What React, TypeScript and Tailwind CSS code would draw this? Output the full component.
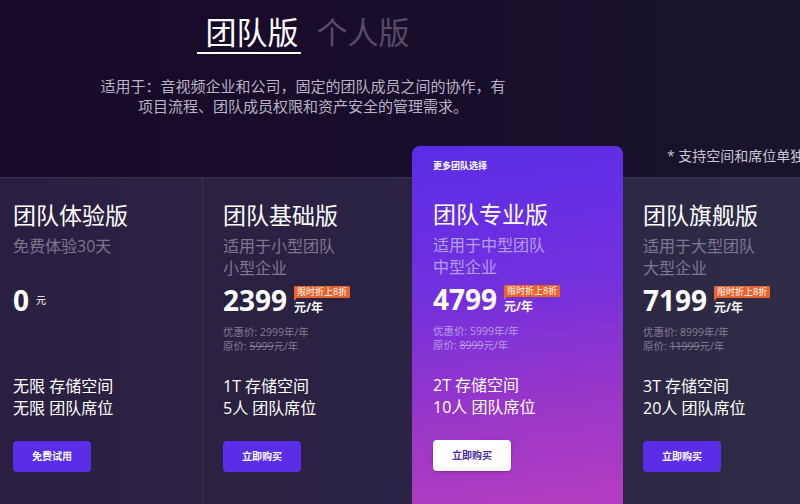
import React from "react";

type Plan = {
  title: string;
  sub: string[];
  price: string;
  unit: "free" | "year";
  promo?: string;
  orig?: string;
  storage: string;
  seats: string;
  btn: string;
  highlight?: boolean;
};

const plans: Plan[] = [
  { title: "团队体验版", sub: ["免费体验30天"], price: "0", unit: "free", storage: "无限 存储空间", seats: "无限 团队席位", btn: "免费试用" },
  { title: "团队基础版", sub: ["适用于小型团队", "小型企业"], price: "2399", unit: "year", promo: "2999", orig: "5999", storage: "1T 存储空间", seats: "5人 团队席位", btn: "立即购买" },
  { title: "团队专业版", sub: ["适用于中型团队", "中型企业"], price: "4799", unit: "year", promo: "5999", orig: "8999", storage: "2T 存储空间", seats: "10人 团队席位", btn: "立即购买", highlight: true },
  { title: "团队旗舰版", sub: ["适用于大型团队", "大型企业"], price: "7199", unit: "year", promo: "8999", orig: "11999", storage: "3T 存储空间", seats: "20人 团队席位", btn: "立即购买" },
];

function Badge() {
  return (
    <span className="relative inline-block h-[12px] px-[3px] bg-[#e8642c] rounded-[1px] text-[9px] leading-[12px] text-white whitespace-nowrap">
      限时折上8折
      <span className="absolute left-0 top-[11px] w-0 h-0 border-t-[4px] border-t-[#e8642c] border-r-[4px] border-r-transparent" />
    </span>
  );
}

function PlanBody({ p }: { p: Plan }) {
  const hl = !!p.highlight;
  return (
    <div className="pt-[22px]">
      <div className="text-[23px] leading-[30px] text-white">{p.title}</div>
      <div className={`mt-[5px] h-[44px] text-[16px] leading-[22px] ${hl ? "text-[#b69ef0]" : "text-[#7f7692]"}`}>
        {p.sub.map((s) => (
          <div key={s}>{s}</div>
        ))}
      </div>
      <div className="mt-[7px] h-[30px] flex items-start">
        <div className="text-[28px] leading-[28px] font-bold text-white">{p.price}</div>
        {p.unit === "free" ? (
          <div className="ml-[7px] mt-[8px] text-[10px] leading-[12px] text-white">元</div>
        ) : (
          <div className="ml-[7px] flex flex-col items-start">
            <Badge />
            <div className="mt-[2px] text-[12px] leading-[16px] font-bold text-white">元/年</div>
          </div>
        )}
      </div>
      <div className={`mt-[9px] h-[28px] text-[10.5px] leading-[14px] ${hl ? "text-[#b79ce6]" : "text-[#857d95]"}`}>
        {p.promo && (
          <>
            <div>优惠价: {p.promo}年/年</div>
            <div>
              原价: <span className="line-through">{p.orig}</span>元/年
            </div>
          </>
        )}
      </div>
      <div className="mt-[22px] text-[16px] leading-[22px] text-white">
        <div>{p.storage}</div>
        <div>{p.seats}</div>
      </div>
      <button
        className={`mt-[22px] w-[78px] h-[31px] rounded-[4px] text-[10px] font-bold flex items-center justify-center ${
          hl ? "bg-white text-[#4b2a9e] shadow-[0_1px_3px_rgba(0,0,0,0.25)]" : "bg-[#5a2ee6] text-white"
        }`}
      >
        {p.btn}
      </button>
    </div>
  );
}

export default function App() {
  return (
    <div className="w-[800px] h-[504px] overflow-hidden flex flex-col bg-[linear-gradient(90deg,#180a28_0%,#180d2b_50%,#19142d_100%)] font-['Open_Sans','Noto_Sans_CJK_SC',sans-serif]">
      <div className="h-[177px] flex flex-col">
        <div className="w-[606px] flex flex-col items-center pt-[12px]">
          <div className="flex items-start">
            <div className="pl-[9px] pr-[2px] border-b-2 border-white text-[31px] leading-[40px] text-white">团队版</div>
            <div className="ml-[16px] text-[31px] leading-[40px] text-[#574a66]">个人版</div>
          </div>
          <div className="mt-[22px] text-[15px] leading-[20px] text-[#bab3c6] text-center">
            适用于：音视频企业和公司，固定的团队成员之间的协作，有
            <br />
            项目流程、团队成员权限和资产安全的管理需求。
          </div>
        </div>
        <div className="mt-[30px] pl-[667px] text-[14px] leading-[20px] text-[#c9c4d2] whitespace-nowrap">* 支持空间和席位单独购买</div>
      </div>
      <div className="flex-1 flex border-t border-[#3a3150] bg-[linear-gradient(90deg,#2a1f40_0%,#2b2343_50%,#2e2c46_100%)]">
        <div className="w-[203px] pl-[13px] border-r border-[#3a3150]">
          <PlanBody p={plans[0]} />
        </div>
        <div className="w-[209px] pl-[20px]">
          <PlanBody p={plans[1]} />
        </div>
        <div className="w-[211px] mt-[-32px] pl-[21px] rounded-t-[8px] bg-[linear-gradient(172deg,#5b2de8_0%,#7330dd_40%,#9836c9_70%,#b43dbf_100%)]">
          <div className="h-[31px] pt-[13px] text-[9px] leading-[14px] font-bold text-white">更多团队选择</div>
          <PlanBody p={plans[2]} />
        </div>
        <div className="flex-1 pl-[20px]">
          <PlanBody p={plans[3]} />
        </div>
      </div>
    </div>
  );
}
